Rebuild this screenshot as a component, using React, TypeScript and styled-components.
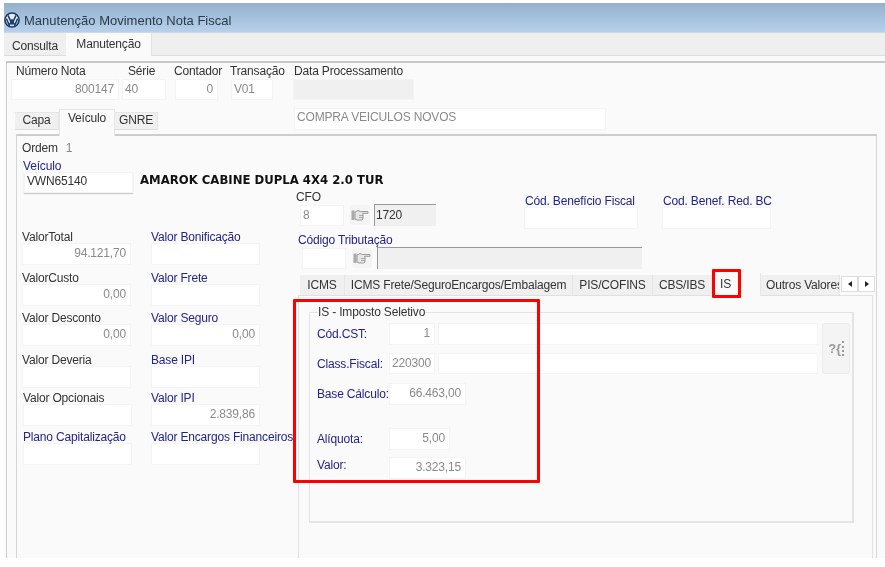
import React from "react";
import styled, { createGlobalStyle } from "styled-components";

const Global = createGlobalStyle`
  html, body { margin: 0; padding: 0; background: #fff; }
  * { box-sizing: border-box; }
`;

const Page = styled.div`
  width: 885px; height: 567px; padding: 3px 0 9px 4px; background: #fff; overflow: hidden;
  font-family: "Liberation Sans", Arial, sans-serif; font-size: 12px; letter-spacing: -0.17px; color: #333;
  display: flex; flex-direction: column; position: relative; filter: blur(0.35px);
`;
const TitleBar = styled.header`
  height: 30px; flex: none; display: flex; align-items: center; gap: 4px; padding-top: 5px;
  background: linear-gradient(#93b0ce, #b7d1eb); border-bottom: 1px solid #c9d9e8;
  font-size: 13px; letter-spacing: 0; color: #2b3a48;
`;
const MainTabs = styled.nav`
  height: 23px; flex: none; display: flex; background: #efefef; border-bottom: 1px solid #ddd;
`;
const MainTab = styled.div<{ $w: number; $active?: boolean }>`
  width: ${p => p.$w}px; text-align: center; color: #333;
  padding-top: ${p => (p.$active ? 4 : 6)}px; background: ${p => (p.$active ? "#fafafa" : "transparent")};
  border-right: ${p => (p.$active ? "1px solid #e2e2e2" : "none")};
  height: ${p => (p.$active ? 23 : 22)}px;
`;
const Body = styled.main`
  flex: 1; min-height: 0; background: #fafafa; padding: 5px 0 0 2px; display: flex;
`;
const Frame = styled.div`
  flex: 1; display: flex; flex-direction: column; border-top: 2px solid #c8c8c8; border-left: 1px solid #cfcfcf;
`;
const HeaderRow = styled.div`
  height: 37px; flex: none; display: flex; padding-left: 4px;
`;
const HeadField = styled.div<{ $w: number; $gap: number; $lx?: number }>`
  width: ${p => p.$w}px; margin-right: ${p => p.$gap}px; flex: none; white-space: nowrap;
  & > span { display: block; height: 16px; line-height: 16px; padding-left: ${p => Math.max(p.$lx ?? 0, 0)}px; margin-left: ${p => Math.min(p.$lx ?? 0, 0)}px; }
`;
const Input = styled.div<{ $w?: number; $h?: number; $right?: boolean; $gray?: boolean }>`
  width: ${p => (p.$w ? `${p.$w}px` : "100%")}; height: ${p => p.$h ?? 21}px; flex: none;
  background: ${p => (p.$gray ? "#f0f0f0" : "#fff")}; border: 1px solid #f4f4f4; color: #8a8a8a;
  line-height: ${p => (p.$h ?? 21) - 3}px; padding: 0 4px 0 2px; white-space: nowrap; overflow: hidden;
  text-align: ${p => (p.$right ? "right" : "left")};
`;
const SubRow = styled.div`
  height: 34px; flex: none; display: flex; align-items: flex-end; padding-left: 8px; position: relative; z-index: 1;
`;
const SubTab = styled.div<{ $w: number; $active?: boolean }>`
  width: ${p => p.$w}px; height: ${p => (p.$active ? 27 : 18)}px; flex: none; text-align: center;
  background: ${p => (p.$active ? "#fafafa" : "#f0f0f0")}; border: 1px solid #e6e6e6;
  border-bottom: ${p => (p.$active ? "none" : "1px solid #dcdcdc")}; border-left-width: ${p => (p.$active ? 1 : 0)}px;
  line-height: ${p => (p.$active ? 17 : 15)}px; margin-bottom: ${p => (p.$active ? -2 : 4)}px;
`;
const DescInput = styled(Input)`
  margin: 0 0 4px 136px; line-height: 17px;
`;
const Inner = styled.section`
  flex: 1; min-height: 0; margin-left: 9px; margin-right: 8px; border: 1px solid #d6d6d6; border-top: 2px solid #cdcdcd;
  border-bottom: none; display: flex; flex-direction: column;
`;
const TopBlock = styled.div`
  height: 54px; flex: none; padding: 5px 0 0 5px;
`;
const OrdemLine = styled.div`
  height: 18px; line-height: 14px; display: flex; gap: 8px; & > b { font-weight: 400; color: #888; }
`;
const Blue = styled.span`
  color: #24248c;
`;
const VeiculoLabel = styled(Blue)`
  display: block; height: 13px; line-height: 14px; padding-left: 1px;
`;
const VeiculoRow = styled.div`
  display: flex; align-items: center; padding-left: 2px; height: 21px;
`;
const VeiculoInput = styled(Input)`
  color: #333; box-shadow: 0 1px 1px #ccc; line-height: 17px;
`;
const Title = styled.strong`
  margin: 0 0 5px 7px; font-family: "DejaVu Sans", sans-serif; font-size: 11.7px; letter-spacing: 0; color: #111; white-space: nowrap;
`;
const Columns = styled.div`
  flex: 1; min-height: 0; display: flex;
`;
const LeftCol = styled.div`
  width: 278px; flex: none; padding: 41px 0 0 5px; display: grid;
  grid-template-columns: 129px 150px; grid-template-rows: 41px 40px 42px 38px 39px 40px; align-content: start;
`;
const Field = styled.div<{ $shift?: number }>`
  padding-left: ${p => p.$shift ?? 0}px; white-space: nowrap;
  & > span { display: block; height: 12px; line-height: 12px; }
`;
const FieldBlue = styled(Field)`
  & > span { color: #24248c; }
`;
const RightCol = styled.div`
  flex: 1; min-width: 0; display: flex; flex-direction: column; min-height: 0;
`;
const CfoRow = styled.div`
  height: 42px; flex: none; display: flex;
`;
const CfoBlock = styled.div`
  width: 229px; flex: none; padding-left: 1px;
  & > span { display: block; height: 14px; line-height: 14px; }
`;
const LookupRow = styled.div<{ $pl: number }>`
  display: flex; align-items: center; height: 22px; padding-left: ${p => p.$pl}px;
`;
const HandButton = styled.div<{ $ml: number; $mr: number }>`
  width: 20px; height: 20px; flex: none; margin: 0 ${p => p.$mr}px 0 ${p => p.$ml}px; background: #f4f4f4;
  border-radius: 3px; display: flex; align-items: center; justify-content: center;
`;
const Sunken = styled.div<{ $w: number }>`
  width: ${p => p.$w}px; height: 22px; flex: none; background: #f0f0f0; border-top: 1px solid #999; border-left: 1px solid #999;
  color: #333; line-height: 20px; padding-left: 1px;
`;
const BenefitBlock = styled.div<{ $w: number; $ml: number }>`
  width: ${p => p.$w}px; margin-left: ${p => p.$ml}px; flex: none; padding-top: 4px; white-space: nowrap;
  & > span { display: block; height: 13px; line-height: 15px; padding-left: 1px; }
`;
const TribBlock = styled.div`
  height: 41px; flex: none; padding: 1px 0 0 3px;
  & > span { display: block; height: 14px; line-height: 14px; }
`;
const TabStrip = styled.div`
  height: 23px; flex: none; display: flex; margin-left: 5px; position: relative; z-index: 1;
`;
const Tab = styled.div<{ $w: number; $active?: boolean; $start?: boolean }>`
  width: ${p => p.$w}px; flex: none; overflow: hidden; white-space: nowrap; text-align: ${p => (p.$active || p.$start ? "left" : "center")};
  background: ${p => (p.$active ? "#fafafa" : "#f0f0f0")}; border-right: 1px solid #e6e6e6;
  margin-top: ${p => (p.$active ? 0 : 2)}px; line-height: ${p => (p.$active ? 22 : 20)}px;
  padding-left: ${p => (p.$active ? 8 : p.$start ? 5 : 0)}px; border-bottom: ${p => (p.$active ? "none" : "1px solid #e0e0e0")};
`;
const Arrows = styled.div`
  display: flex; margin-top: 3px; margin-left: 1px; height: 16px;
`;
const ArrowButton = styled.div`
  width: 17px; height: 16px; background: #fff; border: 1px solid #ddd; display: flex; align-items: center; justify-content: center;
`;
const Tri = styled.i<{ $left?: boolean }>`
  width: 0; height: 0; border-top: 3.5px solid transparent; border-bottom: 3.5px solid transparent;
  border-${p => (p.$left ? "right" : "left")}: 4px solid #222;
`;
const TabPanel = styled.div`
  flex: 1; min-height: 0; margin: -1px 3px 0 3px; border: 1px solid #e2e2e2; border-bottom: none; padding: 10px 18px 35px 10px; display: flex;
`;
const Group = styled.fieldset`
  flex: 1; margin: 0; min-width: 0; border: 2px solid #e4e4e4; border-width: 1px 2px 2px 1px; padding: 0 0 0 7px;
  & > legend { padding: 0; margin-left: 1px; line-height: 12px; height: 12px; white-space: nowrap; background: #fafafa; color: #333; }
`;
const GroupGrid = styled.div`
  display: grid; grid-template-columns: 72px 46px 383px 32px; grid-template-rows: 30px 30px 45px 29px 22px; margin-top: 5px;
`;
const GLabel = styled(Blue)<{ $lh?: number }>`
  grid-column: 1; line-height: ${p => p.$lh ?? 22}px; white-space: nowrap;
`;
const GValue = styled.div`
  grid-column: 2 / span 2; display: flex;
`;
const LongInput = styled(Input)`
  margin-left: 3px;
`;
const HelpButton = styled.div`
  grid-column: 4; grid-row: 1 / span 2; width: 28px; height: 51px; margin-left: 4px; background: #f4f4f4; border: 1px solid #ececec;
  border-radius: 3px; display: flex; align-items: center; justify-content: center; color: #999; font-weight: 700; font-size: 13px;
`;
const Dots = styled.i`
  width: 0; height: 15px; border-left: 2px dotted #999; margin-left: 1px;
`;
const Highlight = styled.div<{ $x: number; $y: number; $w: number; $h: number }>`
  position: absolute; left: ${p => p.$x}px; top: ${p => p.$y}px; width: ${p => p.$w}px; height: ${p => p.$h}px;
  border: 3px solid #f00; border-radius: 1px; z-index: 5;
`;
const LogoSvg = styled.svg`
  flex: none;
`;

const VwLogo = () => (
  <LogoSvg width="16" height="16" viewBox="0 0 24 24">
    <circle cx="12" cy="12" r="10.6" fill="#e8eef5" stroke="#1d3a66" strokeWidth="2.4" />
    <path d="M6 5l6 13 6-13M3.500 10l4.500 10 4-8 4 8 4.500-10" fill="none" stroke="#1d3a66" strokeWidth="2.3" />
  </LogoSvg>
);
const Hand = () => (
  <svg width="18" height="12" viewBox="0 0 18 12">
    <rect x="0.5" y="1.5" width="3" height="9.5" fill="#a9a9a9" />
    <path d="M4 3l3-1.500 2.500 1H17v1.800h-5.500l.5 1v4.700L10.500 11H6L4 10z" fill="#e6e6e6" stroke="#9a9a9a" strokeWidth="1" />
    <path d="M8 6.500h4M8 8.500h4" stroke="#9a9a9a" strokeWidth=".8" />
  </svg>
);

const leftRows: [string, string, boolean, string, string, number][] = [
  ["ValorTotal", "94.121,70", false, "Valor Bonificação", "", 0],
  ["ValorCusto", "0,00", false, "Valor Frete", "", 0],
  ["Valor Desconto", "0,00", false, "Valor Seguro", "0,00", 0],
  ["Valor Deveria", "", false, "Base IPI", "", 0],
  ["Valor Opcionais", "", false, "Valor IPI", "2.839,86", 1],
  ["Plano Capitalização", "", true, "Valor Encargos Financeiros", "", 1],
];

export default function App() {
  return (
    <Page>
      <Global />
      <TitleBar><VwLogo />Manutenção Movimento Nota Fiscal</TitleBar>
      <MainTabs>
        <MainTab $w={62}>Consulta</MainTab>
        <MainTab $w={86} $active>Manutenção</MainTab>
      </MainTabs>
      <Body>
        <Frame>
          <HeaderRow>
            <HeadField $w={108} $gap={3} $lx={5}><span>Número Nota</span><Input $right>800147</Input></HeadField>
            <HeadField $w={44} $gap={9} $lx={6}><span>Série</span><Input>40</Input></HeadField>
            <HeadField $w={43} $gap={13} $lx={-1}><span>Contador</span><Input $right>0</Input></HeadField>
            <HeadField $w={42} $gap={20} $lx={-1}><span>Transação</span><Input>V01</Input></HeadField>
            <HeadField $w={121} $gap={0} $lx={1}><span>Data Processamento</span><Input $gray /></HeadField>
          </HeaderRow>
          <SubRow>
            <SubTab $w={44}>Capa</SubTab>
            <SubTab $w={56} $active>Veículo</SubTab>
            <SubTab $w={43}>GNRE</SubTab>
            <DescInput $w={312} $h={22}>COMPRA VEICULOS NOVOS</DescInput>
          </SubRow>
          <Inner>
            <TopBlock>
              <OrdemLine>Ordem <b>1</b></OrdemLine>
              <VeiculoLabel>Veículo</VeiculoLabel>
              <VeiculoRow>
                <VeiculoInput $w={109}>VWN65140</VeiculoInput>
                <Title>AMAROK CABINE DUPLA 4X4 2.0 TUR</Title>
              </VeiculoRow>
            </TopBlock>
            <Columns>
              <LeftCol>
                {leftRows.flatMap(([a, av, blue, b, bv, sh]) => {
                  const First = blue ? FieldBlue : Field;
                  return [
                    <First key={a} $shift={sh}>
                      <span>{a}</span>
                      <Input $w={109} $h={22} $right>{av}</Input>
                    </First>,
                    <FieldBlue key={b}>
                      <span>{b}</span>
                      <Input $w={109} $h={22} $right>{bv}</Input>
                    </FieldBlue>,
                  ];
                })}
              </LeftCol>
              <RightCol>
                <CfoRow>
                  <CfoBlock>
                    <span>CFO</span>
                    <LookupRow $pl={4}>
                      <Input $w={44} $h={21}>8</Input>
                      <HandButton $ml={6} $mr={4}><Hand /></HandButton>
                      <Sunken $w={62}>1720</Sunken>
                    </LookupRow>
                  </CfoBlock>
                  <BenefitBlock $w={114} $ml={0}>
                    <Blue as="span">Cód. Benefício Fiscal</Blue>
                    <Input $w={114} $h={22} />
                  </BenefitBlock>
                  <BenefitBlock $w={109} $ml={24}>
                    <Blue as="span">Cod. Benef. Red. BC</Blue>
                    <Input $w={109} $h={22} />
                  </BenefitBlock>
                </CfoRow>
                <TribBlock>
                  <Blue as="span">Código Tributação</Blue>
                  <LookupRow $pl={4}>
                    <Input $w={44} $h={21} />
                    <HandButton $ml={6} $mr={5}><Hand /></HandButton>
                    <Sunken $w={265} />
                  </LookupRow>
                </TribBlock>
                <TabStrip>
                  <Tab $w={45}>ICMS</Tab>
                  <Tab $w={228}>ICMS Frete/SeguroEncargos/Embalagem</Tab>
                  <Tab $w={80}>PIS/COFINS</Tab>
                  <Tab $w={59}>CBS/IBS</Tab>
                  <Tab $w={49} $active>IS</Tab>
                  <Tab $w={79} $start>Outros Valores</Tab>
                  <Arrows>
                    <ArrowButton><Tri $left /></ArrowButton>
                    <ArrowButton><Tri /></ArrowButton>
                  </Arrows>
                </TabStrip>
                <TabPanel>
                  <Group>
                    <legend>IS - Imposto Seletivo</legend>
                    <GroupGrid>
                      <GLabel>Cód.CST:</GLabel>
                      <GValue><Input $w={46} $h={22} $right>1</Input><LongInput $w={380} $h={22} /></GValue>
                      <HelpButton>?&#123;<Dots /></HelpButton>
                      <GLabel>Class.Fiscal:</GLabel>
                      <GValue><Input $w={46} $h={21} $right>220300</Input><LongInput $w={380} $h={21} /></GValue>
                      <GLabel>Base Cálculo:</GLabel>
                      <GValue><Input $w={77} $h={22} $right>66.463,00</Input></GValue>
                      <GLabel>Alíquota:</GLabel>
                      <GValue><Input $w={61} $h={22} $right>5,00</Input></GValue>
                      <GLabel $lh={16}>Valor:</GLabel>
                      <GValue><Input $w={77} $h={22} $right>3.323,15</Input></GValue>
                    </GroupGrid>
                  </Group>
                </TabPanel>
              </RightCol>
            </Columns>
          </Inner>
        </Frame>
      </Body>
      <Highlight $x={712} $y={269} $w={29} $h={29} />
      <Highlight $x={293} $y={299} $w={247} $h={184} />
    </Page>
  );
}
